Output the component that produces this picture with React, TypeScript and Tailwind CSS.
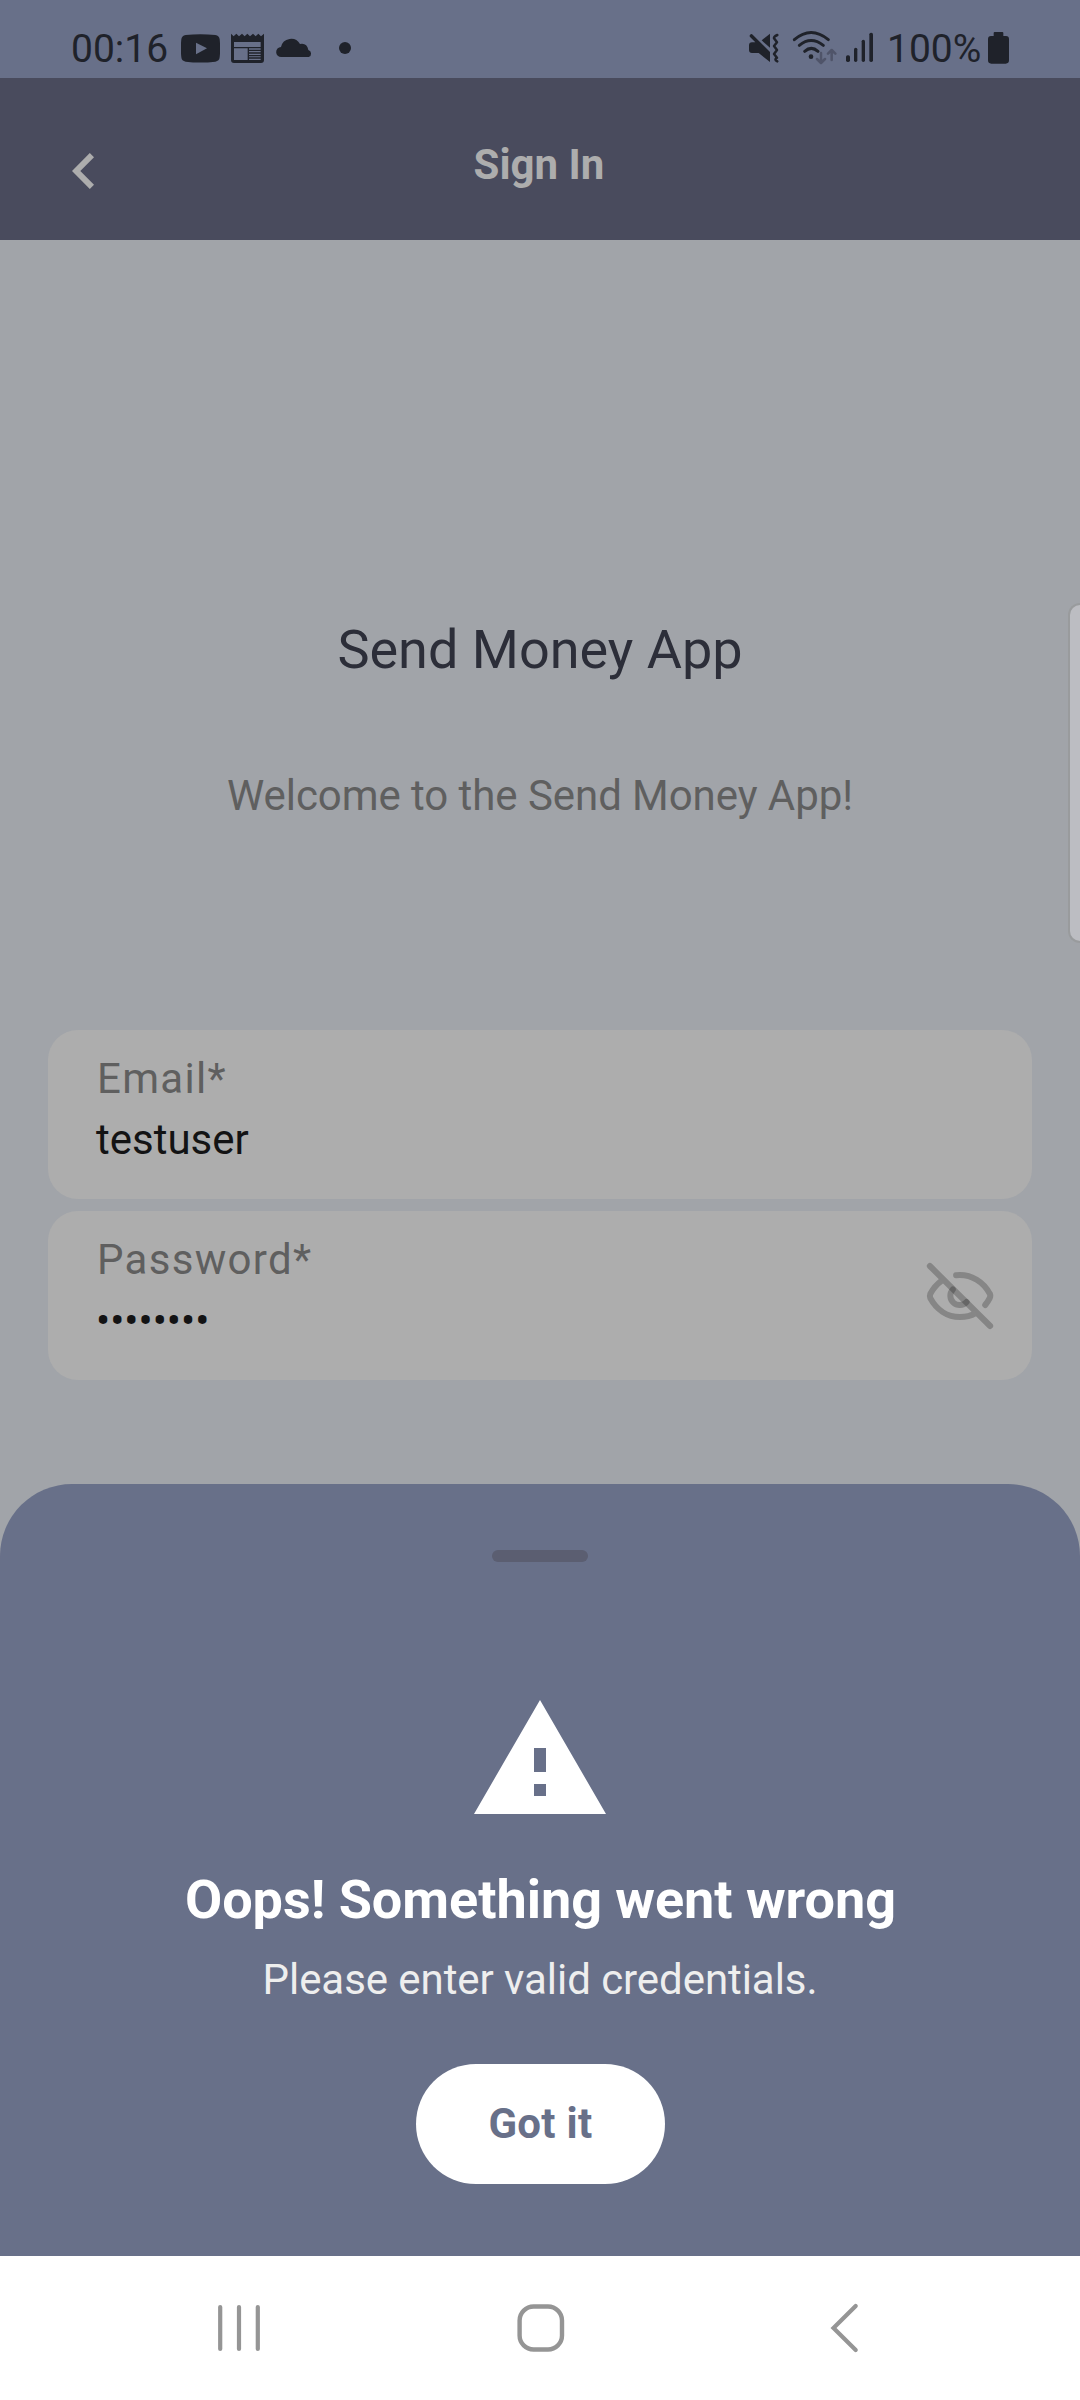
import React from "react";

function StatusBar() {
  return (
    <div className="flex h-[78px] items-start bg-[#687089] pl-[71px] pr-[70px] text-[39px] leading-[46px] text-[#1f222a]">
      <span className="w-[110px] shrink-0 pt-[26px]">00:16</span>
      <svg className="h-[78px] w-[39px] shrink-0" viewBox="393 -30 117 234" fill="currentColor">
        <path d="M407 75Q451 70 496 75Q508 77 509 88Q512 115 509 142Q508 153 496 155Q451 160 407 155Q395 153 394 142Q391 115 394 88Q395 77 407 75Z" />
        <path d="M438 98V133L471 115Z" fill="#687089" />
      </svg>
      <svg className="ml-[11px] h-[78px] w-[33px] shrink-0" viewBox="543 -30 99 234" fill="currentColor">
        <path d="M543 71L551 79L559 71L567 79L576 71L584 79L592 71L600 79L609 71L617 79L625 71L633 79L642 71V150Q642 159 633 159H552Q543 159 543 150Z" />
        <path d="M552 96H632V111H552ZM552 115H593V150H552ZM597 115H632V119H597ZM597 123H632V127H597ZM597 131H632V135H597ZM597 139H632V142H597ZM597 146H632V150H597Z" fill="#687089" />
      </svg>
      <svg className="ml-[12px] h-[78px] w-[37px] shrink-0" viewBox="678 -30 111 234" fill="currentColor">
        <path d="M694 141A15 15 0 0 1 693 111A31 31 0 0 1 750 102Q771 98 775 120A11 11 0 0 1 776 141Z" />
      </svg>
      <svg className="ml-[25px] h-[78px] w-[14px] shrink-0" viewBox="864 -30 42 234" fill="currentColor">
        <circle cx="885" cy="114" r="18" />
      </svg>

      <svg className="ml-auto h-[78px] w-[32px] shrink-0" viewBox="84 -30 96 234" fill="currentColor">
        <path d="M96 97H106L91 82A5 5 0 0 1 98 74L150 126V156L116 129H96Q87 129 87 120V106Q87 97 96 97Z" />
        <path d="M125 91L150 71V113Z" />
        <path d="M172 75Q161 80 162 85L171 97L162 108L171 120L162 132L171 143Q161 149 172 154" fill="none" stroke="currentColor" strokeWidth="7.5" strokeLinejoin="round" strokeLinecap="round" />
      </svg>
      <svg className="ml-[12px] h-[78px] w-[45px] shrink-0" viewBox="216 -30 135 234" fill="none" strokeLinecap="round" strokeLinejoin="round">
        <g stroke="currentColor" strokeWidth="9">
          <path d="M223 89Q273 46 325 89" />
          <path d="M238 106Q273 77 310 106" />
          <path d="M254 124Q274 106 294 124" />
        </g>
        <circle cx="273" cy="140" r="7" fill="currentColor" />
        <path d="M303 129V157M291 147L303 159L315 147M335 150V121M324 131L335 120L346 131" stroke="#4f5469" strokeWidth="7.5" />
      </svg>
      <svg className="ml-[8px] h-[78px] w-[29px] shrink-0" viewBox="375 -30 87 234" fill="currentColor">
        <rect x="378" y="136" width="12" height="20" rx="5" />
        <rect x="402" y="113" width="10" height="43" rx="5" />
        <rect x="425" y="89" width="10" height="67" rx="5" />
        <rect x="448" y="68" width="11" height="88" rx="5" />
      </svg>
      <span className="ml-[13px] w-[100px] shrink-0 pt-[26px]">100%</span>
      <svg className="h-[78px] w-[23px] shrink-0" viewBox="801 -30 69 234" fill="currentColor">
        <path d="M824 66H847Q850 66 850 69V78H858Q867 78 867 87V151Q867 161 857 161H814Q804 161 804 151V87Q804 78 813 78H821V69Q821 66 824 66Z" />
      </svg>
    </div>
  );
}

function Header() {
  return (
    <header className="relative flex h-[162px] justify-center bg-[#494b5d] pt-[62px] pr-[2px]">
      <button aria-label="Back" className="absolute left-[72px] top-[75px]">
        <svg className="block h-[36px] w-[22px]" viewBox="0 0 22 36" fill="#adadad">
          <path d="M17.8 0L22 4.2L8.3 18L22 31.8L17.8 36L0 18Z" />
        </svg>
      </button>
      <h1 className="text-[42px] font-bold leading-[49px] text-[#adadad]">Sign In</h1>
    </header>
  );
}

function EyeOffIcon() {
  return (
    <svg className="h-[72px] w-[72px]" viewBox="0 0 24 24" fill="none" strokeWidth="2" strokeLinecap="round" strokeLinejoin="round">
      <g stroke="#000" strokeOpacity="0.23">
        <path d="M1.95 2L22.05 22" />
        <path d="M9.6 9.8A3 3 0 1 0 14.2 14" />
      </g>
      <g stroke="#868686">
        <path d="M10.7 5.05C16 4.5 20 7.6 21.9 11.2Q22.3 11.9 21.9 12.7Q21.3 13.9 20.4 15" />
        <path d="M5.9 6.9Q3.5 8.7 2.1 11.3Q1.8 12 2.1 12.7C4.2 16.6 7.8 19 12 19C14 19 15.8 18.5 17.2 17.7" strokeLinecap="butt" />
      </g>
    </svg>
  );
}

function Field({ label, value, children }: { label: string; value: string; children?: React.ReactNode }) {
  return (
    <div className="flex h-[169px] justify-between rounded-[30px] bg-[#adadad] pl-12 pr-[36px] text-[42px] leading-[49px]">
      <div className="flex flex-col gap-3 pt-6">
        <label className="pl-px tracking-[1.3px] text-[#5f5f5f]">{label}</label>
        <span className="text-[#131314]">{value}</span>
      </div>
      {children}
    </div>
  );
}

function ErrorSheet() {
  return (
    <section className="flex h-[772px] flex-col items-center rounded-t-[72px] bg-[#687089] pt-[66px]">
      <div className="h-3 w-24 rounded-full bg-[#5b5e71]" />
      <svg className="mt-[126px] h-36 w-36" viewBox="0 0 24 24" fill="#fff">
        <path d="M1 21h22L12 2 1 21zm12-3h-2v-2h2v2zm0-4h-2v-4h2v4z" />
      </svg>
      <h2 className="mt-9 pl-px text-[54px] font-bold leading-[63px] tracking-[-0.03px] text-white">Oops! Something went wrong</h2>
      <p className="mt-6 text-[42px] leading-[49px] tracking-[-0.06px] text-[#eeeeee]">Please enter valid credentials.</p>
      <button className="mt-[60px] flex h-[120px] w-[249px] justify-center rounded-full bg-white pt-[35px] pl-px text-[42px] font-bold leading-[49px] tracking-[0.3px] text-[#687089]">
        Got it
      </button>
    </section>
  );
}

function NavigationBar() {
  return (
    <nav className="flex h-36 items-center bg-white pl-[216px]">
      <svg className="h-[52px] w-[46px]" viewBox="216 2302 46 52" fill="none" stroke="#959595" strokeWidth="4.2" strokeLinecap="round">
        <path d="M220.2 2307V2349M239 2307V2349M257.8 2307V2349" />
      </svg>
      <svg className="ml-[253px] h-[52px] w-[52px]" viewBox="515 2302 52 52" fill="none" stroke="#959595" strokeWidth="4.4">
        <rect x="519.6" y="2306.5" width="42.4" height="43" rx="14" />
      </svg>
      <svg className="ml-[261px] h-[52px] w-[34px]" viewBox="828 2302 34 52" fill="none" stroke="#959595" strokeWidth="4.2" strokeLinecap="round">
        <path d="M855.7 2306L833.5 2328L855.7 2350" />
      </svg>
    </nav>
  );
}

export default function App() {
  return (
    <div className="relative flex h-[2400px] w-[1080px] flex-col overflow-hidden bg-[#a1a4a9] font-[Roboto,sans-serif]">
      <StatusBar />
      <Header />
      <main className="flex h-[1244px] flex-col">
        <h2 className="mt-[378px] text-center text-[54px] leading-[63px] text-[#2c2e39]">Send Money App</h2>
        <p className="mt-[90px] text-center text-[42px] leading-[49px] tracking-[-0.06px] text-[#5f5f5f]">Welcome to the Send Money App!</p>
        <div className="mt-[210px] flex flex-col gap-3 px-12">
          <Field label="Email*" value="testuser" />
          <Field label="Password*" value="••••••••">
            <button aria-label="Show password" className="mt-[49px] h-[72px] w-[72px]">
              <EyeOffIcon />
            </button>
          </Field>
        </div>
      </main>
      <ErrorSheet />
      <NavigationBar />
      <div className="absolute right-0 top-[603px] h-[340px] w-[12px] rounded-l-[12px] border-2 border-r-0 border-[#999b9d] bg-[#bcbdc2]" />
    </div>
  );
}
